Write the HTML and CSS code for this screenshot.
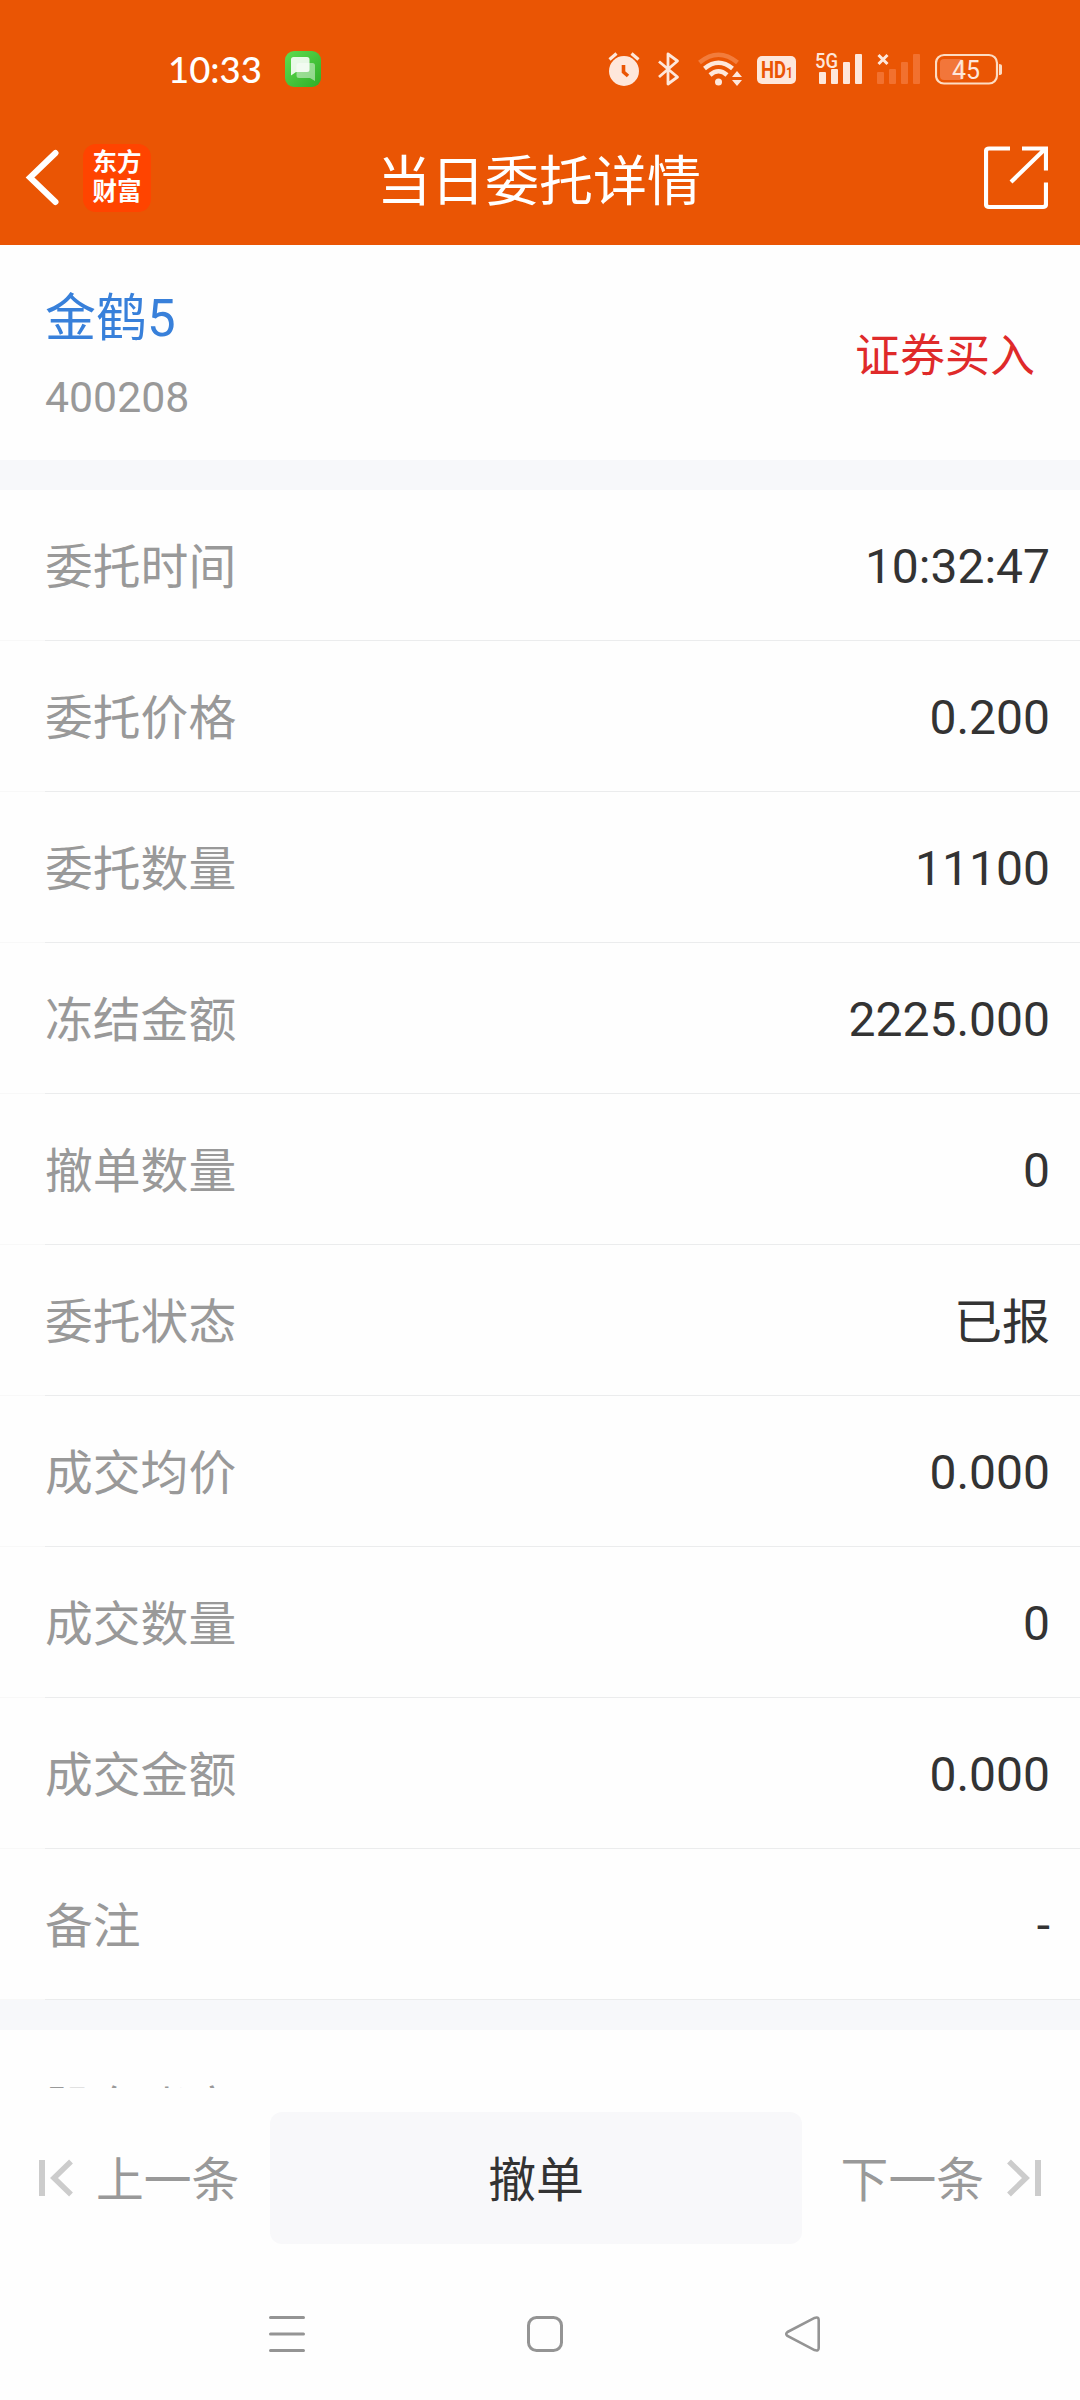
FILE: index.html
```html
<!DOCTYPE html>
<html lang="zh-CN">
<head>
    <meta charset="UTF-8">
    <meta name="viewport" content="width=device-width, initial-scale=1.0">
    <title>当日委托详情</title>
    <link rel="stylesheet" href="styles.css">
</head>

<body>
    <header class="header">
        <div class="status-bar">
            <div class="status-left">
                <span class="status-time">10:33</span>
                <svg class="status-message" width="36" height="36" viewBox="0 0 36 36">
                    <defs>
                        <linearGradient id="green" x1="0" y1="0" x2="1" y2="1">
                            <stop offset="0" stop-color="#5fdc50"/>
                            <stop offset="1" stop-color="#2fae27"/>
                        </linearGradient>
                    </defs>
                    <rect width="36" height="36" rx="9" fill="url(#green)"/>
                    <path d="M14 12h13.500q2.500 0 2.500 2.500V30l-5-3H14q-2.500 0-2.500-2.500v-10Q11.500 12 14 12z" fill="#fff" opacity=".45"/>
                    <path d="M8.500 6H22q2.500 0 2.500 2.500v10Q24.500 21 22 21H11l-5 3.500v-16Q6 6 8.500 6z" fill="#fff" opacity=".87"/>
                </svg>
            </div>
            <div class="status-right">
                <svg class="icon-alarm" width="32" height="34" viewBox="0 0 32 34">
                    <circle cx="16" cy="19" r="15" fill="#fee7db"/>
                    <path d="M1.500 7.500l7-6M30.500 7.500l-7-6" stroke="#fee7db" stroke-width="3.200"/>
                    <path d="M15.500 13v7l4.500 4" fill="none" stroke="#ea5504" stroke-width="3.600"/>
                </svg>
                <svg class="icon-bluetooth" width="22" height="34" viewBox="0 0 22 34">
                    <path d="M1 9.500l18.500 15.500-9.500 7V2l9.500 7L1 25" fill="none" stroke="#fee7db" stroke-width="2.800" stroke-linejoin="round"/>
                </svg>
                <svg class="icon-wifi" width="45" height="34" viewBox="0 0 45 34">
                    <path d="M1.500 10.500q19-15.500 38 0" fill="none" stroke="#f27c3c" stroke-width="4.500"/>
                    <path d="M6.500 16.500q14-11.500 28 0" fill="none" stroke="#fee7db" stroke-width="4.500"/>
                    <path d="M12 23q8.500-7.500 17 0" fill="none" stroke="#fee7db" stroke-width="4.500"/>
                    <circle cx="20.500" cy="30" r="3.500" fill="#fee7db"/>
                    <path d="M34 25l5-6 5 6zM34 28h10l-5 6z" fill="#fee7db"/>
                </svg>
                <svg class="icon-hd" width="40" height="28" viewBox="0 0 40 28">
                    <rect width="39" height="28" rx="5" fill="#fee7db"/>
                    <text x="4" y="22" class="hd-text" textLength="32" lengthAdjust="spacingAndGlyphs">HD<tspan class="hd-num">1</tspan></text>
                </svg>
                <svg class="icon-signal" width="46" height="34" viewBox="0 0 46 34">
                    <text x="-1" y="15.500" class="signal-text" textLength="23" lengthAdjust="spacingAndGlyphs">5G</text>
                    <g fill="#fee7db">
                        <rect x="3" y="20" width="7" height="12" rx="1"/>
                        <rect x="15" y="17" width="7" height="15" rx="1"/>
                        <rect x="27" y="10" width="7" height="22" rx="1"/>
                        <rect x="39" y="2" width="7" height="30" rx="1"/>
                    </g>
                </svg>
                <svg class="icon-nosignal" width="43" height="34" viewBox="0 0 43 34">
                    <path d="M1.500 3l9 9m0-9l-9 9" stroke="#fee7db" stroke-width="3"/>
                    <g fill="#f2712f">
                        <rect x="0" y="20" width="7" height="12" rx="1"/>
                        <rect x="12" y="17" width="7" height="15" rx="1"/>
                        <rect x="24" y="10" width="7" height="22" rx="1"/>
                        <rect x="36" y="2" width="7" height="30" rx="1"/>
                    </g>
                </svg>
                <svg class="icon-battery" width="68" height="34" viewBox="0 0 68 34">
                    <rect x="1" y="3" width="61" height="28.500" rx="8" fill="none" stroke="#fddcc3" stroke-width="2.200"/>
                    <rect x="5" y="7" width="24" height="21" rx="4" fill="#f2763a"/>
                    <path d="M64 12q3 0 3 2v7q0 2-3 2z" fill="#fddcc3"/>
                    <text x="17" y="27" class="battery-text" textLength="28" lengthAdjust="spacingAndGlyphs">45</text>
                </svg>
            </div>
        </div>

        <div class="title-bar">
            <div class="title-left">
                <svg width="34" height="58" viewBox="0 0 34 58">
                    <path d="M30.500 4L5 28.500 30.500 53" fill="none" stroke="#fff" stroke-width="6" stroke-linecap="round"/>
                </svg>
                <div class="logo">
                    <span>东方</span>
                    <span>财富</span>
                </div>
            </div>
            <h1 class="title">当日委托详情</h1>
            <div class="title-right">
                <svg width="64" height="64" viewBox="0 0 64 64" fill="none" stroke="#fff" stroke-width="4.200">
                    <path d="M26 2.500H5q-3 0-3 3V58q0 3 3 3h54q3 0 3-3V36.500M38 2.500h24v22M61 3L27 36"/>
                </svg>
            </div>
        </div>
    </header>

    <main class="content">
        <section class="stock">
            <div>
                <h2 class="stock-name">金鹤5</h2>
                <p class="stock-code">400208</p>
            </div>
            <span class="stock-type">证券买入</span>
        </section>

        <ul class="detail-list">
            <li><span>委托时间</span><b>10:32:47</b></li>
            <li><span>委托价格</span><b>0.200</b></li>
            <li><span>委托数量</span><b>11100</b></li>
            <li><span>冻结金额</span><b>2225.000</b></li>
            <li><span>撤单数量</span><b>0</b></li>
            <li><span>委托状态</span><b class="state">已报</b></li>
            <li><span>成交均价</span><b>0.000</b></li>
            <li><span>成交数量</span><b>0</b></li>
            <li><span>成交金额</span><b>0.000</b></li>
            <li><span>备注</span><b>-</b></li>
        </ul>

        <ul class="detail-list account-list">
            <li><span>股东账户</span></li>
        </ul>
    </main>

    <footer class="action-bar">
        <button class="button-page">
            <svg width="34" height="38" viewBox="0 0 34 38" fill="none" stroke="#ccc">
                <path d="M3 1v36" stroke-width="6"/>
                <path d="M32 2.500L15 19l17 16.500" stroke-width="5.500"/>
            </svg>
            <span>上一条</span>
        </button>
        <button class="button-cancel"><span>撤单</span></button>
        <button class="button-page button-next">
            <span>下一条</span>
            <svg width="34" height="38" viewBox="0 0 34 38" fill="none" stroke="#ccc">
                <path d="M31 1v36" stroke-width="6"/>
                <path d="M2 2.500L19 19 2 35.500" stroke-width="5.500"/>
            </svg>
        </button>
    </footer>

    <nav class="system-nav">
        <svg width="36" height="36" viewBox="0 0 36 36" stroke="#949494" stroke-width="3" stroke-linecap="round">
            <path d="M1.500 1.500h33M1.500 18h33M1.500 34.500h33"/>
        </svg>
        <svg width="36" height="36" viewBox="0 0 36 36" fill="none" stroke="#949494" stroke-width="3">
            <rect x="1.500" y="1.500" width="33" height="33" rx="8"/>
        </svg>
        <svg width="36" height="36" viewBox="0 0 36 36" fill="none" stroke="#949494" stroke-width="2.600">
            <path d="M2.500 16L29.500 1.900Q33.700.500 33.700 4v28q0 3.500-4.200 2.100L2.500 20q-2.500-2 0-4z"/>
        </svg>
    </nav>
</body>
</html>
```

FILE: styles.css
```css
:root {
    --color-primary: #EA5504;
    --color-logo: #FF4400;
    --color-background: #FEFEFE;
    --color-band: #F7F8FA;
    --color-line: #EBECED;
    --color-text: #333333;
    --color-label: #999999;
    --color-blue: #3880DA;
    --color-red: #DF2A2A;
    --color-status: #FEE7DB;
}

* {
    margin: 0;
    padding: 0;
    box-sizing: border-box;
}

body {
    height: 2400px;
    display: flex;
    flex-direction: column;
    overflow: hidden;
    background-color: var(--color-background);
    color: var(--color-text);
    font-family: Roboto, "Noto Sans CJK SC", sans-serif;
}

svg {
    display: block;
    flex-shrink: 0;
}

/* Status bar */
.header {
    height: 245px;
    flex-shrink: 0;
    background-color: var(--color-primary);
}

.status-bar {
    height: 110px;
    padding: 28px 78px 0 168px;
    display: flex;
    justify-content: space-between;
}

.status-left,
.status-right {
    height: 82px;
    display: flex;
    align-items: center;
}

.status-time {
    width: 117px;
    color: #fff;
    font-family: Lato, sans-serif;
    font-size: 36.5px;
    font-weight: 500;
    line-height: 40px;
}

.icon-bluetooth {
    margin-left: 18px;
}

.icon-wifi {
    margin-left: 18px;
}

.icon-hd {
    margin: 2px 0 0 14px;
}

.icon-signal {
    margin-left: 19px;
    overflow: visible;
}

.icon-nosignal {
    margin-left: 15px;
}

.icon-battery {
    margin-left: 15px;
    margin-right: -1px;
}

.icon-hd text,
.icon-signal text,
.icon-battery text {
    font-family: Roboto, sans-serif;
}

.hd-text {
    font-size: 23px;
    font-weight: 700;
    fill: var(--color-primary);
}

.hd-num {
    font-size: 15px;
}

.signal-text {
    font-size: 21px;
    font-weight: 500;
    fill: var(--color-status);
}

.battery-text {
    font-size: 26px;
    fill: var(--color-status);
}

/* Title bar */
.title-bar {
    height: 135px;
    padding: 0 32px 0 25px;
    display: flex;
    align-items: center;
    justify-content: space-between;
}

.title-left,
.title-right {
    width: 200px;
    display: flex;
    align-items: center;
}

.title-right {
    width: 195px;
    justify-content: flex-end;
}

.logo {
    width: 68px;
    height: 68px;
    margin-left: 24px;
    padding-top: 4px;
    border-radius: 13px;
    background-color: var(--color-logo);
    color: #fff;
    font-size: 24.5px;
    font-weight: 700;
    line-height: 29px;
    display: flex;
    flex-direction: column;
    align-items: center;
}

.title {
    color: #fff;
    font-size: 54px;
    font-weight: 400;
    line-height: 80px;
    padding-top: 10px;
}

/* Stock */
.content {
    height: 1843px;
    flex-shrink: 0;
    overflow: hidden;
}

.stock {
    height: 215px;
    padding: 0 45px;
    display: flex;
    justify-content: space-between;
}

.stock-name {
    padding-top: 36px;
    color: var(--color-blue);
    font-size: 51px;
    font-weight: 400;
    line-height: 76px;
}

.stock-code {
    color: var(--color-label);
    font-size: 42.8px;
    line-height: 80px;
}

.stock-type {
    padding-top: 79px;
    color: var(--color-red);
    font-size: 45px;
    line-height: 66px;
}

/* Order details */
.detail-list {
    border-top: 30px solid var(--color-band);
    list-style: none;
}

.detail-list li {
    height: 151px;
    padding: 2px 30px 0 45px;
    display: flex;
    align-items: center;
    justify-content: space-between;
    background: linear-gradient(90deg, #F8F8F8 45px, var(--color-line) 45px) 0 100% / 100% 1px no-repeat;
    font-size: 48px;
    line-height: 72px;
}

.detail-list span {
    padding-top: 3px;
    color: var(--color-label);
    font-size: 47.8px;
}

.detail-list b {
    font-weight: 400;
}

.detail-list .state {
    padding-top: 3px;
}

.account-list li {
    padding-top: 6px;
}

/* Bottom buttons */
.action-bar {
    height: 180px;
    padding: 24px 38px 0 39px;
    flex-shrink: 0;
    display: flex;
    align-items: flex-start;
}

button {
    height: 132px;
    border: none;
    background: none;
    font-family: inherit;
    font-size: 47.8px;
    cursor: pointer;
}

button span {
    display: block;
    padding-bottom: 3px;
}

.button-page {
    width: 231px;
    display: flex;
    align-items: center;
    gap: 23px;
    color: var(--color-label);
    white-space: nowrap;
}

.button-next {
    width: 239px;
    justify-content: flex-end;
}

.button-cancel {
    width: 532px;
    border-radius: 12px;
    background-color: #F8F8FA;
    color: var(--color-text);
}

/* System navigation */
.system-nav {
    height: 132px;
    padding: 0 259px 0 269px;
    display: flex;
    align-items: center;
    justify-content: space-between;
}
```
